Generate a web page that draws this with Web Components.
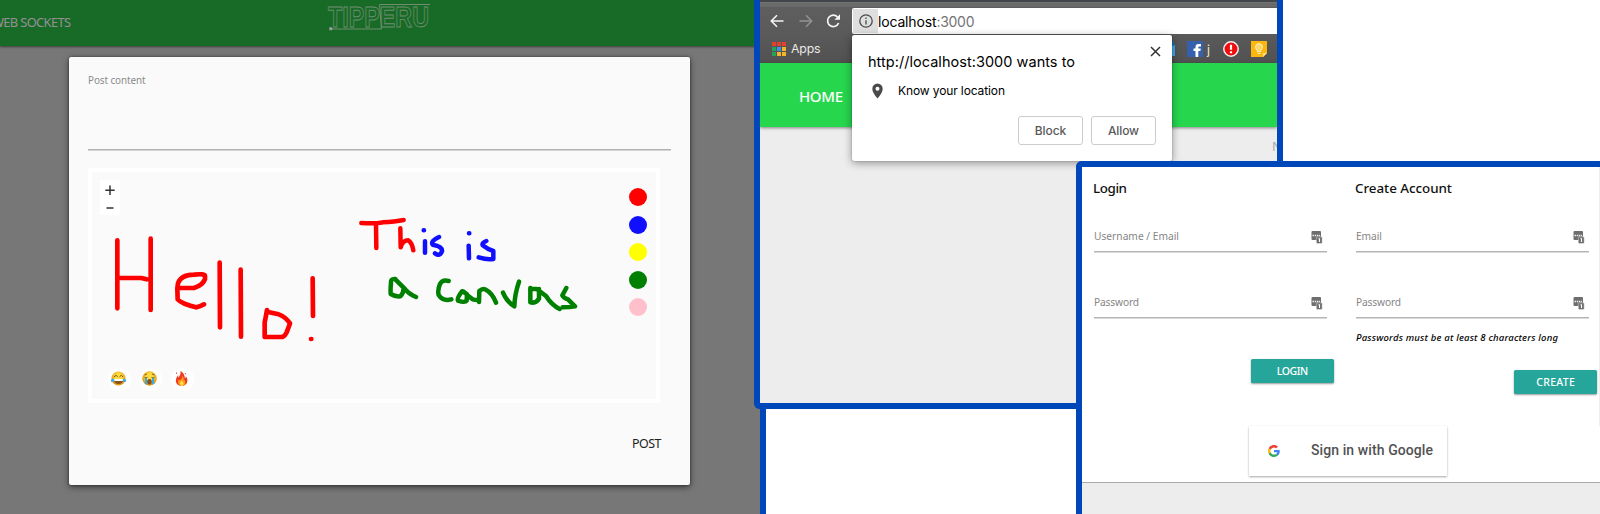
<!DOCTYPE html>
<html lang="en">
<head>
<meta charset="utf-8">
<title>Tipperu</title>
<style>
html,body{margin:0;height:514px;overflow:hidden;background:#fff;font-family:"Noto Sans","Open Sans",sans-serif}
</style>
</head>
<body>
<feature-collage></feature-collage>
<script>
const define = (name, html, extra) => customElements.define(name, class extends HTMLElement {
  connectedCallback() {
    if (this.shadowRoot) return;
    this.attachShadow({mode: 'open'}).innerHTML = html;
    if (extra) extra(this, this.shadowRoot);
  }
});

/* Overlapping screens */
define('feature-collage', `
<style>
:host{display:block;position:relative;width:1600px;height:514px;overflow:hidden;background:#fff}
.blank{position:absolute;left:760px;top:300px;width:400px;height:220px;border-left:6px solid #0047ba;background:#fff}
post-screen{position:absolute;left:0;top:0}
browser-screen{position:absolute;left:754px;top:0}
login-screen{position:absolute;left:1076px;top:161px}
</style>
<post-screen></post-screen><div class="blank"></div><browser-screen></browser-screen><login-screen></login-screen>`);

/* Post editor */
define('post-screen', `
<style>
:host{display:flex;flex-direction:column;width:760px;height:514px;background:#777;overflow:hidden}
header{height:46px;flex:none;background:#186b27;display:flex;box-shadow:0 1px 2px rgba(0,0,0,.5);box-sizing:border-box}
.nav{margin:13px 0 0 -8px;width:79px;font-size:12.9px;line-height:18px;color:#968f96}
tipperu-logo{margin:2px 0 0 256px}
.modal{margin:11px 0 0 69px;width:621px;height:428px;box-sizing:border-box;background:#fafafa;border-radius:2px;box-shadow:0 2px 6px rgba(0,0,0,.55),0 0 2px rgba(0,0,0,.5);padding:0 19px;display:flex;flex-direction:column}
.label{margin-top:15px;font-size:9.900px;line-height:16px;color:#8a8a8a;display:flex}
.rule{margin-top:61px;height:1px;background:#b2b2b2;width:583px;box-shadow:0 1px #d4d4d4}
drawing-board{margin-top:18px}
.post{font-size:12.4px;line-height:18px;color:#222;display:flex;align-self:flex-end;margin:32px 9.500px 0 0}
</style>
<header><div class="nav"><fit-text w="79">WEB SOCKETS</fit-text></div><tipperu-logo></tipperu-logo></header>
<section class="modal">
<div class="label"><fit-text w="57.5">Post content</fit-text></div>
<div class="rule"></div>
<drawing-board></drawing-board>
<div class="post"><fit-text w="29.5">POST</fit-text></div>
</section>`);

define('tipperu-logo', `
<style>:host{display:block}svg{display:block;overflow:visible}text{font:700 30px "Liberation Sans",sans-serif;fill:none;stroke:#6f8d70;stroke-width:.9}</style>
<svg width="110" height="36" viewBox="327 2 110 36">
<text x="328" y="27" textLength="101" lengthAdjust="spacingAndGlyphs">TIPPERU</text>
<path d="M331 29H381.500L379.500 4.500H430" fill="none" stroke="#6f8d70"/><circle cx="330.800" cy="28.700" r="1.800" fill="#9b9a9b"/></svg>`);

define('drawing-board', `
<style>
:host{display:grid;grid-template-columns:auto auto;justify-content:space-between;align-content:space-between;box-sizing:border-box;position:relative;width:572px;height:235px;border:4px solid #fff;padding:8px 9px 8px 8px}
.ink{position:absolute;left:-4px;top:-4px;pointer-events:none}
.zoom{width:20px;height:35px;background:#fff}
.zoom svg{display:block}
.colors{display:flex;flex-direction:column;gap:9.400px;padding-top:8.400px;grid-column:2}
.colors i{width:18px;height:18px;border-radius:50%;background:var(--c)}
.emoji{display:flex;gap:8.300px;margin-left:8px;grid-row:2}
.emoji svg{display:block;width:23px;height:23px;border-radius:50%;background:#fff}
</style>
<div class="zoom"><svg width="20" height="35"><path d="M5.300 10.200h9.400M10 5.500v9.400M6.500 28h7" stroke="#333" stroke-width="1.500"/></svg></div>
<div class="colors"><i style="--c:#f00"></i><i style="--c:#1010ff"></i><i style="--c:#ff0"></i><i style="--c:green"></i><i style="--c:pink"></i></div>
<div class="emoji">
<svg viewBox="0 0 23 23"><defs><radialGradient id="y" cy=".4"><stop offset=".5" stop-color="#ffdc3d"/><stop offset="1" stop-color="#e39a14"/></radialGradient></defs><circle cx="10.500" cy="10.500" r="7" fill="url(#y)"/><path d="M6 9l2-1.700 1.700 1.500M11.500 8.800l1.700-1.500L15 9" stroke="#79501b" fill="none"/><path d="M5.500 11h10q-.5 5-5 5t-5-5z" fill="#88511e"/><path d="M6 11h9.200l-.6 2H6.500z" fill="#fff"/><path d="M6 10.500Q2 11 3 13.500q1.600 1.700 3-.500zM15 10.500q4 .500 3 3-1.600 1.700-3-.500z" fill="#37aee5"/></svg>
<svg viewBox="0 0 23 23"><defs><radialGradient id="z" cy=".4"><stop offset=".5" stop-color="#ffdc3d"/><stop offset="1" stop-color="#e39a14"/></radialGradient></defs><circle cx="10.500" cy="10.500" r="7.200" fill="url(#z)"/><path d="M5.500 7L8 6M13 6l2.500 1M5.500 9.300q1.700 1 3 0M12.500 9.300q1.700 1 3 0" stroke="#79501b" fill="none" stroke-width=".9"/><ellipse cx="10.500" cy="13.700" rx="2.300" ry="2.700" fill="#88511e"/><path d="M6 9.800h2v7l-2-.700zM13 9.800h2v6.300l-2 .700z" fill="#37a9e5"/></svg>
<svg viewBox="0 0 23 23"><path d="M9.500 3q.500 3-1 5L7.600 9.500Q7 8 7.200 7q-2.600 3-2.400 6 .5 4.500 5.700 5 5.500-.500 5.900-5 .1-2.500-1.500-5-.2 1.800-1 2.400Q13.500 5 9.500 3z" fill="#ed3a22"/><path d="M11.300 7.500q.300 2.500-1.400 4l-1.300 1-.7-1.300q-1.200 2-.8 3.600.8 3 3.700 3.200 3.400-.500 3.600-3.500 0-1.500-.8-2.800l-.8 1.100q.2-3.500-1.500-5.300z" fill="#ff9c19"/><path d="M10.800 12.500q-1.800 1.700-1.800 3.300.3 1.900 1.800 2.100 1.700-.4 1.800-2.100-.4-1.700-1.800-3.300z" fill="#ffe14a"/><path d="M5.500 4.500l.2 1.500M14.300 5l.2 1.200" stroke="#ed4a32"/></svg>
</div>
<svg class="ink" width="572" height="235" viewBox="88 168 572 235" fill="none" stroke-linecap="round" stroke-linejoin="round">
<g transform="translate(60 160) scale(.33333)" stroke="#f00" stroke-width="14">
<path d="M172 241V445M175 354H244L260 358M272 236V450M360 384H402Q430 374 435 357V348Q435 340 402 344Q362 345 354 370L352 385L353 418Q365 432 408 442Q421 440 432 433M479 308L480 502M542 329L543 530M621 450Q616 479 614 487V531H667Q676 527 680 517L690 490Q676 470 656 463L624 456M758 355L759 468M753 537L754 537"/></g>
<g transform="translate(340 190) scale(.33333)" stroke-width="13.500">
<g stroke="#f00"><path d="M64 99Q110 101 128 97Q165 95 191 90M108 101L109 174M181 115L182 172Q188 151 205 151Q216 158 220 181"/></g>
<g stroke="#1010ff"><path d="M251 121L252 121M255 154V188M297 141Q271 153 278 164Q308 169 306 184Q300 201 285 190M387 130L388 130M386 167L387 205M439 153Q425 158 428 166Q443 178 460 183V207Q441 210 416 202"/></g>
<g stroke="green"><path d="M166 267Q151 265 153 281Q151 294 152 312Q167 321 181 319Q190 311 191 296M166 268L193 295Q204 310 228 321M326 273Q307 268 300 282Q292 300 296 315Q309 335 334 328M366 304Q350 325 354 332Q375 339 380 332L381 313L369 304M381 315L398 328Q414 332 416 329M417 336L418 303Q428 294 435 298Q457 309 468 338M489 308Q500 335 523 349Q524 313 537 275M571 294V337Q589 341 597 326V297M571 297H590L618 318Q635 345 659 357M679 294L667 316Q670 323 684 328L705 349Q690 352 668 352"/></g>
</g></svg>`);

/* Browser window with a location prompt */
define('browser-screen', `
<style>
:host{display:flex;flex-direction:column;width:529px;height:409px;box-sizing:border-box;border:6px solid #0047ba;border-top:0;border-radius:0 0 0 6px;background:#ededed;overflow:hidden;font-family:Inter,sans-serif}
.chrome{height:63px;flex:none;background:linear-gradient(#43474b 0 2px,#777 2px,#666 4px,#707070 6px,#5e5e5e 7px,#5a5a5a 35px,#515151);box-sizing:border-box}
.tools{display:flex;align-items:center;height:35px;box-sizing:border-box;padding:8px 0 1px 9px}
.tools svg{flex:none}
.url{margin-left:11px;flex:1;height:26px;background:#fff;display:flex;align-items:center;font-size:14px;line-height:20px;color:#000;border-radius:2px 0 0 2px}
.url fit-text{position:relative;top:.5px}
.info{width:25px;height:24px;margin:0 1px;background:#dfdfdf;display:flex;align-items:center;justify-content:center}
.info+*{margin-left:-1px}
.port{color:#747474}
.marks{display:flex;height:28px;align-items:center;padding-left:12px;color:#e8e8e8;font-size:12.300px}
.marks svg{flex:none;display:block}
.apps{margin-left:5px;line-height:16px}
.j{margin-left:4px;width:6px}
.hero{height:64px;flex:none;background:#26d74e;box-shadow:0 1px 3px rgba(0,0,0,.45);font:500 15px/20px "Noto Sans",sans-serif;color:#fff;padding:23px 0 0 39px;box-sizing:border-box;display:flex}
.more{align-self:flex-end;font:13px/16px "Noto Sans",sans-serif;color:#aaa;margin:11px -5px 0 0}
location-prompt{position:absolute;left:92px;top:35px}
</style>
<div class="chrome"><div class="tools">
<svg width="14" height="14" viewBox="0 0 14 14" fill="none" stroke="#f4f4f4" stroke-width="1.600" style="margin-left:1px"><path d="M13.500 7H1.500M7 1.300L1.300 7 7 12.700"/></svg>
<svg width="14" height="14" viewBox="0 0 14 14" fill="none" stroke="#929292" stroke-width="1.500" style="margin-left:15px"><path d="M.5 7h12M7 1.300L12.700 7 7 12.700"/></svg>
<svg width="15" height="16" viewBox="0 0 15 16" fill="none" stroke="#f4f4f4" stroke-width="1.700" style="margin-left:13px"><path d="M12.600 10A5.700 5.700 0 1 1 11.500 4"/><path d="M14 1.200V6.800H8.400z" fill="#f4f4f4" stroke="none"/></svg>
<div class="url"><span class="info"><svg width="14" height="14" viewBox="0 0 14 14" fill="none" stroke="#4b4b4b" stroke-width="1.300"><circle cx="7" cy="7" r="6.200"/><path d="M7 6.200V10.500M7 3.500V5"/></svg></span><fit-text w="58.5">localhost</fit-text><fit-text w="38" class="port">:3000</fit-text></div></div>
<div class="marks">
<svg width="14" height="14" viewBox="0 0 14 14"><path d="M0 0h4v4H0zM5 0h4v4H5zM10 0h4v4h-4z" fill="#e5402f"/><path d="M0 5h4v4H0zM0 10h4v4H0z" fill="#24a35a"/><path d="M5 5h4v4H5z" fill="#3b90ef"/><path d="M10 5h4v4h-4zM5 10h4v4H5zM10 10h4v4h-4z" fill="#f4b52a"/></svg>
<span class="apps"><fit-text w="29.5">Apps</fit-text></span>
<svg width="14" height="16" viewBox="0 0 14 16" style="margin-left:340.500px"><path d="M4 4h10v11H4z" fill="#42a9ef"/><path d="M10 1h3v4h-3z" fill="#1675b8"/></svg>
<svg width="16" height="16" viewBox="0 0 16 16" style="margin-left:12px"><path d="M0 0h16v16H0z" fill="#3560ad"/><path d="M8.500 16V10H6.500V7.500h2V6Q8.500 3 11.500 3H14v2.500h-1.500Q11.300 5.500 11.300 6.500v1h2.500L13.400 10h-2.100v6z" fill="#fff"/></svg>
<span class="j">j</span>
<svg width="16" height="16" viewBox="0 0 16 16" style="margin-left:10px"><circle cx="8" cy="8" r="7.200" fill="#f00c0c" stroke="#eee" stroke-width="1.500"/><path d="M8 3.800v5M8 10.200v2" stroke="#fff" stroke-width="2.200"/></svg>
<svg width="16" height="16" viewBox="0 0 16 16" style="margin-left:12px"><path d="M0 0h16v12l-4 4H0z" fill="#fbb70d"/><path d="M16 12h-4v4z" fill="#ffe18c"/><path d="M6.200 9.300Q4.500 8 4.500 6.100a3.500 3.500 0 0 1 7 0Q11.500 8 9.800 9.300v1.400H6.200zM6.500 12.500h3" fill="#ffd56b" stroke="#fff0bd"/></svg>
</div></div>
<div class="hero"><fit-text w="44">HOME</fit-text></div>
<div class="more">N</div>
<location-prompt></location-prompt>`);

define('location-prompt', `
<style>
:host{display:flex;flex-direction:column;box-sizing:border-box;width:320px;height:126px;padding:10px 16px 16px;background:#fff;border-radius:2px;box-shadow:0 0 1px rgba(0,0,0,.6),0 2px 9px rgba(0,0,0,.4);color:#000}
.title{display:flex;justify-content:space-between;font-size:14.500px;line-height:20px;padding-top:7px}
.title svg{margin:-9.500px -8px 0 0}
.row{display:flex;align-items:center;font-size:12px;line-height:18px;margin-top:10px;padding-left:4px}
.row svg{margin-right:15px}
.buttons{display:flex;gap:8px;justify-content:flex-end;margin-top:auto}
button{box-sizing:border-box;width:65px;height:29px;border:1px solid #ccc;border-radius:3px;background:#fff;color:#595959;font:500 12px/18px Inter,sans-serif;padding:0}
</style>
<div class="title"><fit-text w="207">http://localhost:3000 wants to</fit-text><svg width="17" height="17" viewBox="0 0 17 17" stroke="#333" stroke-width="1.500"><path d="M4 4l9 9M13 4l-9 9"/></svg></div>
<div class="row"><svg width="11" height="16" viewBox="0 0 11 16"><path fill="#4a4a4a" fill-rule="evenodd" d="M5.500.500A5.200 5.200 0 0 0 .3 5.700Q.3 9.500 5.500 15.500 10.700 9.500 10.700 5.700A5.200 5.200 0 0 0 5.500.500M5.500 3.700a2 2 0 1 1 0 4 2 2 0 0 1 0-4"/></svg><fit-text w="107">Know your location</fit-text></div>
<div class="buttons"><button><fit-text w="31.5">Block</fit-text></button><button><fit-text w="31">Allow</fit-text></button></div>`);

/* Login and registration */
define('login-screen', `
<style>
:host{display:flex;flex-direction:column;box-sizing:border-box;width:524px;height:353px;border:6px solid #0047ba;border-right:0;border-bottom:0;border-radius:6px 0 0 0;background:#fff}
.forms{display:flex;gap:24px;padding-left:11px;height:259px;border-right:1px solid #eee;box-sizing:border-box;flex:none}
.form{display:flex;flex-direction:column;width:238px}
h2{margin:11px 0 0;font:500 13.400px/20px "Noto Sans",sans-serif;color:#111;display:flex}
form-field{margin:23px 0 0 1px}
form-field+form-field{margin-top:34.800px}
.hint{display:flex;margin:12.500px 0 0 1px;font:italic 500 9.500px/14px "Noto Sans",sans-serif;color:#000}
.btn{align-self:flex-end;margin:40.500px -3px 0 0;width:83px;height:24px;border-radius:1.500px;background:#26a69a;box-shadow:0 1px 2px rgba(0,0,0,.4);color:#fff;font-size:10.500px;line-height:24px;font-weight:500;text-align:center}
.create{margin:25px -4px 0 0}
google-button{margin-left:167px}
footer{margin-top:6px;flex:1;background:#ededed;border-top:1px solid #aaa}
</style>
<div class="forms">
<div class="form"><h2><fit-text w="34">Login</fit-text></h2><form-field label="Username / Email" w="85"></form-field><form-field label="Password" w="45"></form-field><div class="btn"><fit-text w="31.5">LOGIN</fit-text></div></div>
<div class="form"><h2><fit-text w="97">Create Account</fit-text></h2><form-field label="Email" w="26"></form-field><form-field label="Password" w="45"></form-field><div class="hint"><fit-text w="202">Passwords must be at least 8 characters long</fit-text></div><div class="btn create"><fit-text w="38.5">CREATE</fit-text></div></div>
</div>
<google-button></google-button><footer></footer>`);

define('form-field', `
<style>
:host{display:flex;justify-content:space-between;box-sizing:border-box;width:233px;height:31.200px;border-bottom:1px solid #b5b5b5;box-shadow:0 1px #dadada;padding:6px 4px 0 0;font-size:10.200px;line-height:18px;color:#858585}
svg{margin-top:4px}
</style>
<fit-text></fit-text><svg width="12" height="13" viewBox="0 0 11 13"><rect width="9.500" height="9" rx="1" fill="#6e6e6e"/><path d="M1 4.500h7.500" stroke="#eee" stroke-width="1.300" stroke-dasharray="1.500 .700"/><rect x="4.800" y="5.800" width="5.900" height="6.700" rx="1" fill="#6e6e6e" stroke="#fff" stroke-width=".4"/><path d="M7 7.700h1v3.300" fill="none" stroke="#fff" stroke-width="1.100"/></svg>`,
(host, root) => {
  const t = root.querySelector('fit-text');
  t.textContent = host.getAttribute('label');
  t.setAttribute('w', host.getAttribute('w'));
});

define('google-button', `
<style>:host{display:flex;align-items:center;box-sizing:border-box;width:198px;height:50px;padding-left:19px;background:#fff;box-shadow:0 1px 2px rgba(0,0,0,.35);font:500 14px/18px Roboto,sans-serif;color:#525252}svg{margin-right:31px}fit-text{margin-top:-3px}</style>
<svg width="12" height="12" viewBox="0 0 48 48"><path fill="#ea4335" d="M24 9.500c3.540 0 6.710 1.220 9.210 3.600l6.850-6.850C35.900 2.380 30.470 0 24 0 14.620 0 6.510 5.380 2.560 13.220l7.980 6.190C12.430 13.720 17.740 9.500 24 9.500z"/><path fill="#4285f4" d="M46.980 24.550c0-1.570-.15-3.090-.38-4.550H24v9.020h12.940c-.58 2.960-2.260 5.480-4.780 7.180l7.730 6c4.510-4.180 7.090-10.360 7.090-17.650z"/><path fill="#fbbc05" d="M10.530 28.590c-.48-1.450-.76-2.990-.76-4.590s.27-3.140.76-4.590l-7.980-6.190C.92 16.460 0 20.120 0 24s.92 7.540 2.560 10.780z"/><path fill="#34a853" d="M24 48c6.480 0 11.930-2.130 15.890-5.810l-7.730-6c-2.150 1.450-4.920 2.300-8.160 2.300-6.260 0-11.570-4.220-13.470-9.910l-7.980 6.190C6.510 42.620 14.620 48 24 48z"/></svg><fit-text w="122">Sign in with Google</fit-text>`);

/* A line of text whose tracking is set so that it fills the given width */
define('fit-text', `<style>:host{display:inline-block;white-space:pre;text-align:left}span{display:inline-block}</style><span><slot></slot></span>`,
(host, root) => {
  const span = root.querySelector('span'), w = parseFloat(host.getAttribute('w'));
  const n = host.textContent.length;
  span.style.letterSpacing = (w - span.getBoundingClientRect().width) / (n - 1) + 'px';
  host.style.width = w + 'px';
});
</script>
</body>
</html>
